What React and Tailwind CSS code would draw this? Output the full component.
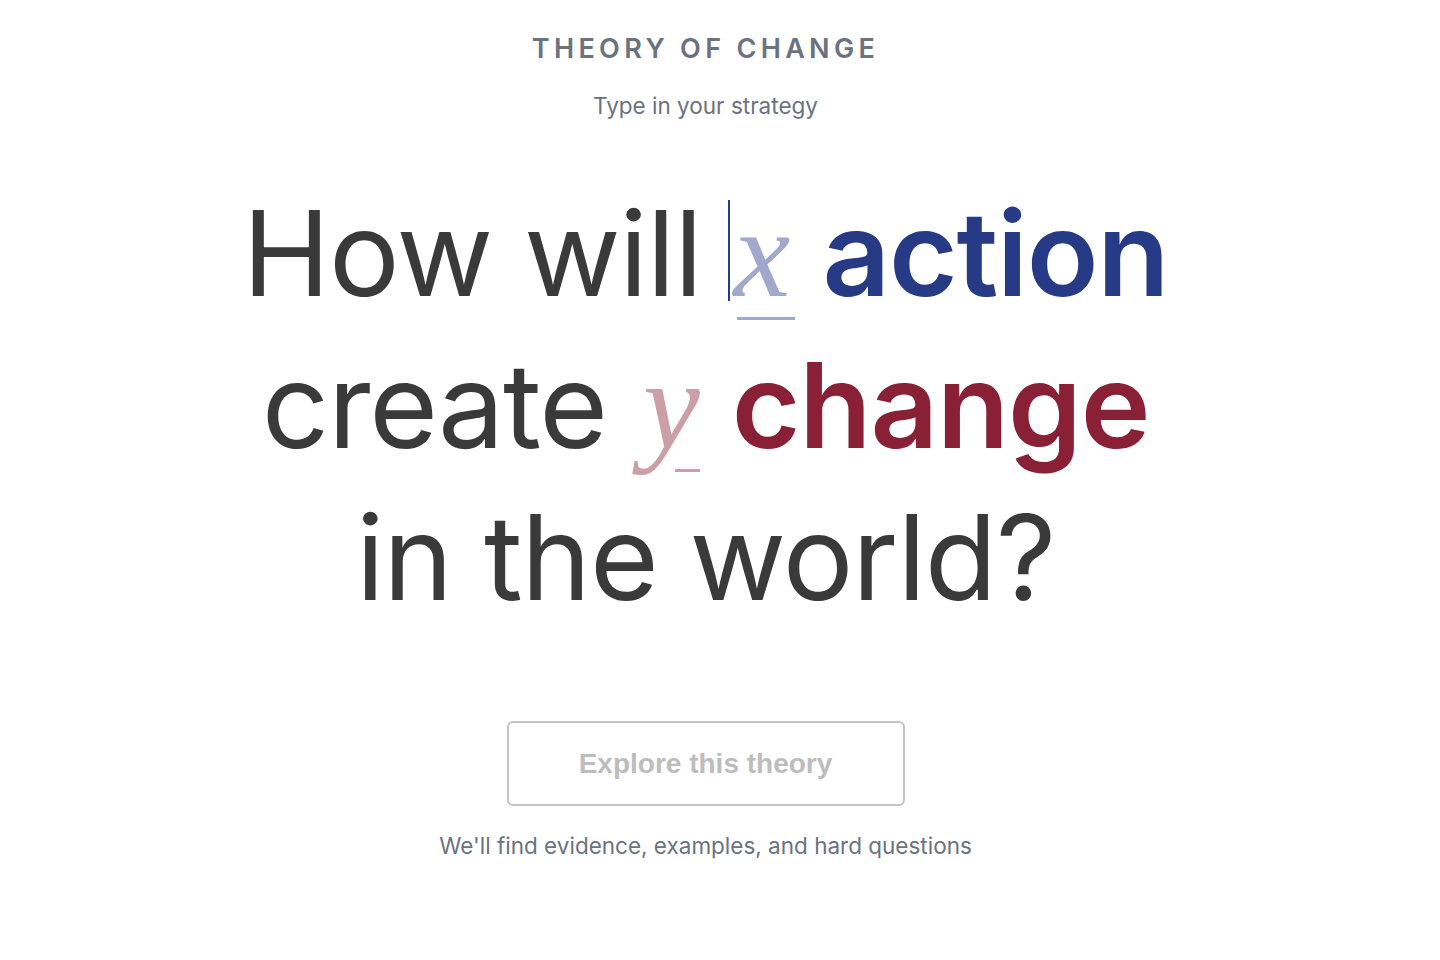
import React from "react";

export default function App() {
  return (
    <div className="min-h-screen w-full bg-white pr-[29px]">
      <div className="flex flex-col items-center pt-[31px] font-['Inter',sans-serif]">
        <div className="text-[27px] font-semibold tracking-[0.16em] text-[#6b7280] leading-[36px]">
          THEORY OF CHANGE
        </div>
        <div className="mt-[24px] text-[22.5px] text-[#6b7280] leading-[30px]">
          Type in your strategy
        </div>

        <div className="mt-[56px] text-center text-[118px] text-[#3a3a3a] tracking-[-0.01em]">
          <div className="leading-[152px] whitespace-nowrap">
            How will{" "}
            <span className="relative inline-block leading-none font-['Liberation_Serif',serif] italic text-[128px] text-[#a0a8cc] tracking-normal">
              <span className="absolute left-[-6px] top-[11px] h-[101px] w-[2px] bg-[#26398a]"></span>
              x
              <span className="absolute left-[3px] top-[128px] h-[3px] w-[58px] bg-[#a0a8cc]"></span>
            </span>{" "}
            <span className="font-semibold text-[#263a85]">action</span>
          </div>
          <div className="leading-[152px] whitespace-nowrap">
            create{" "}
            <span className="relative ml-[4px] inline-block leading-none font-['Liberation_Serif',serif] italic text-[128px] text-[#cc9ea6] tracking-normal">
              y
              <span className="absolute right-[0px] top-[128px] h-[3px] w-[25px] bg-[#cc9ea6]"></span>
            </span>{" "}
            <span className="font-semibold text-[#8a2036]">change</span>
          </div>
          <div className="leading-[152px] whitespace-nowrap">in the world?</div>
        </div>

        <button className="mt-[88px] flex h-[85px] w-[398px] items-center justify-center rounded-[6px] border-2 border-[#c4c4c4] bg-white font-['Liberation_Sans',Arial,sans-serif] text-[28px] font-bold text-[#bdbdbd]">
          Explore this theory
        </button>
        <div className="mt-[25px] text-[22.5px] text-[#6b7280] leading-[30px]">
          We'll find evidence, examples, and hard questions
        </div>
      </div>
    </div>
  );
}
